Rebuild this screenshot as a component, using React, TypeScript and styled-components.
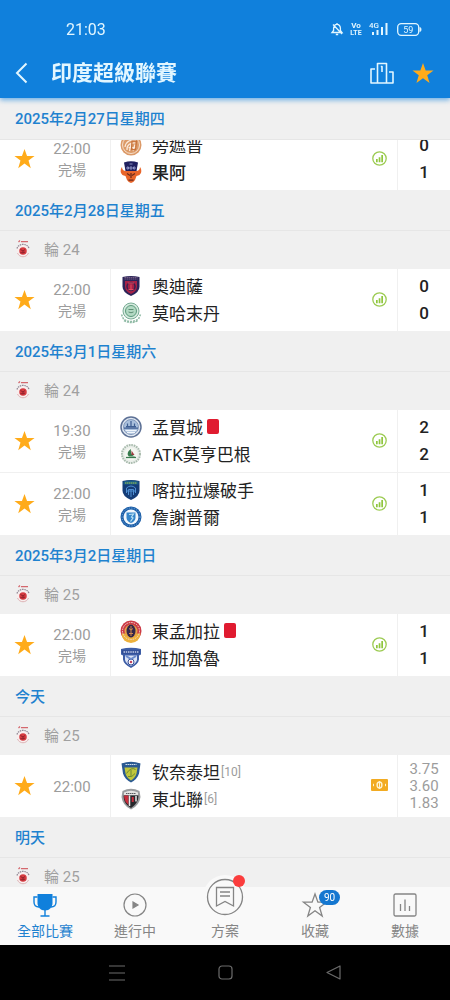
import React, { useLayoutEffect, useRef } from "react";
import styled, { createGlobalStyle } from "styled-components";

const color = {
  brand: "#1080dc",
  onBrand: "#e2f6ff",
  link: "#1f82cf",
  star: "#ffab1a",
  band: "#f0f0f0",
  line: "#e6e6e6",
  cellLine: "#f0f0f0",
  text: "#222222",
  muted: "#9c9c9c",
  tab: "#858585",
};

const GlobalStyle = createGlobalStyle`
  * { box-sizing: border-box; }
  body {
    margin: 0;
    background: #000;
    font-family: Roboto, "Noto Sans CJK TC", sans-serif;
    color: ${color.text};
  }
  button {
    border: 0;
    padding: 0;
    background: none;
    font: inherit;
    color: inherit;
    cursor: pointer;
  }
  h1, h2, h3, p, ul { margin: 0; padding: 0; font-size: inherit; font-weight: inherit; }
  ul { list-style: none; }
  svg { display: block; flex: none; overflow: visible; }
`;

const Screen = styled.div`
  display: flex;
  flex-direction: column;
  height: 100vh;
  background: ${color.band};
`;

const Header = styled.header`
  position: relative;
  z-index: 3;
  flex: none;
  background: ${color.brand};
  color: ${color.onBrand};
  box-shadow: 0 2px 5px rgba(16, 128, 220, 0.6);
`;

const StatusBar = styled.div`
  display: flex;
  align-items: center;
  justify-content: space-between;
  height: 50px;
  padding: 8px 28px 0 66px;
  font-size: 16px;
`;

const StatusIcons = styled.div`
  display: flex;
  align-items: center;
  gap: 8px;
`;

const AppBar = styled.div`
  display: flex;
  align-items: center;
  height: 48px;
  padding: 0 16px 2px 12px;
`;

const Title = styled.h1`
  flex: 1;
  padding-left: 19px;
  font-size: 21px;
  line-height: 30px;
  font-weight: 700;
`;

const IconButton = styled.button`
  display: grid;
  place-items: center;
  min-width: 20px;
  height: 32px;
`;

const Actions = styled.div`
  display: flex;
  align-items: center;
  gap: 18px;
`;

const Schedule = styled.main`
  flex: 1;
  min-height: 0;
  overflow-y: auto;
  scrollbar-width: none;
`;

const Day = styled.section`
  position: relative;
`;

const DayTitle = styled.h2<{ $pinned?: boolean }>`
  position: ${(p) => (p.$pinned ? "sticky" : "static")};
  top: 0;
  z-index: 1;
  height: ${(p) => (p.$pinned ? 42 : 41)}px;
  padding-left: 15px;
  border-bottom: 1px solid ${color.line};
  background: ${color.band};
  color: ${color.link};
  font-size: 15px;
  line-height: 42px;
  font-weight: 500;
`;

const Round = styled.h3`
  display: flex;
  align-items: center;
  gap: 14px;
  height: 38px;
  padding: 0 0 3px 16px;
  background: ${color.band};
  color: #a0a0a0;
  font-size: 15px;
`;

const MatchRow = styled.li`
  display: grid;
  grid-template-columns: 48px 62px minmax(0, 1fr) 36px 53px;
  height: 62px;
  background: #fff;

  & + & {
    height: 63px;
    border-top: 1px solid ${color.cellLine};
  }
`;

const StarButton = styled.button`
  display: grid;
  place-items: center;
  padding-bottom: 2px;
`;

const Kickoff = styled.div`
  display: flex;
  flex-direction: column;
  justify-content: center;
  padding: 2px 14px 0 0;
  color: ${color.muted};
  font-size: 15px;
  line-height: 21px;
  text-align: center;
`;

const Phase = styled.span`
  font-size: 14px;
`;

const Teams = styled.div`
  display: flex;
  flex-direction: column;
  justify-content: center;
  padding: 0 0 2px 9px;
  border-left: 1px solid ${color.cellLine};
`;

const Team = styled.div<{ $winner?: boolean }>`
  display: flex;
  align-items: center;
  height: 27px;
  font-size: 17px;
  font-weight: ${(p) => (p.$winner ? 500 : 400)};
`;

const TeamName = styled.span`
  padding-left: 10px;
  white-space: nowrap;
`;

const Rank = styled.span`
  padding-left: 1px;
  color: ${color.muted};
  font-size: 12px;
`;

const RedCard = styled.span`
  width: 12px;
  height: 15px;
  margin-left: 4px;
  border-radius: 2px;
  background: #e01b30;
`;

const Extra = styled.div`
  display: grid;
  place-items: center;
  padding-bottom: 2px;
`;

const Result = styled.div<{ $odds?: boolean }>`
  display: flex;
  flex-direction: column;
  justify-content: center;
  border-left: 1px solid ${color.cellLine};
  text-align: center;
  color: ${(p) => (p.$odds ? color.muted : color.text)};
  font-size: ${(p) => (p.$odds ? 15 : 17)}px;
  line-height: ${(p) => (p.$odds ? 17 : 27)}px;
  font-weight: ${(p) => (p.$odds ? 400 : 500)};
`;

const TabBar = styled.nav`
  position: relative;
  z-index: 2;
  flex: none;
  display: grid;
  grid-template-columns: repeat(5, 1fr);
  height: 58px;
  background: #f9f9f9;
`;

const Tab = styled.button<{ $active?: boolean }>`
  display: flex;
  flex-direction: column;
  align-items: center;
  gap: 4px;
  padding-top: 6px;
  color: ${(p) => (p.$active ? color.link : color.tab)};
  font-size: 14px;
  line-height: 20px;
`;

const TabIcon = styled.span`
  position: relative;
  width: 24px;
  height: 24px;
`;

const CountBadge = styled.span`
  position: absolute;
  top: -3px;
  left: 16px;
  width: 21px;
  border-radius: 8px;
  background: #1577d0;
  color: #fff;
  font-size: 10px;
  line-height: 15px;
  text-align: center;
`;

const RaisedIcon = styled.span`
  position: absolute;
  top: -18px;
  left: -10px;
  display: grid;
  place-items: center;
  width: 44px;
  height: 44px;
  border-radius: 50%;
  background: #f9f9f9;
`;

const Dot = styled.span`
  position: absolute;
  top: 0;
  right: 2px;
  width: 12px;
  height: 12px;
  border-radius: 50%;
  background: #fb3d3d;
`;

const SystemNav = styled.nav`
  flex: none;
  display: grid;
  grid-template-columns: repeat(3, 1fr);
  height: 55px;
  padding: 0 14%;
  background: #000;
`;

const SystemButton = styled.button`
  display: grid;
  place-items: center;
`;

const STAR = "M12 1l2.9 8.2h8.6l-6.9 5.2 2.6 8.6-7.2-5.2L4.800 23l2.600-8.600L.5 9.200h8.600z";

const StarIcon = ({ size = 21, outline = false }: { size?: number; outline?: boolean }) => (
  <svg width={size} height={size} viewBox="0 0 24 24" aria-hidden="true">
    <path d={STAR} fill={outline ? "none" : color.star} stroke={outline ? color.tab : "none"} strokeWidth="1.3" />
  </svg>
);

const BellOff = () => (
  <svg width="12" height="14" viewBox="0 0 12 14" fill="none" stroke="currentColor" strokeWidth="1.3">
    <path d="M1 10.500h10L9.400 8.500V6.200C9.400 4 8 2.400 6 2.400S2.600 4 2.600 6.200v2.300zM6 1v1.400M4.800 12.500h2.400M2 2.500l9 9.500" />
  </svg>
);

const VoLte = () => (
  <svg width="10" height="14" viewBox="0 0 10 14" fill="currentColor" fontFamily="Roboto" fontWeight="700">
    <text x="5" y="6" fontSize="8" textAnchor="middle">Vo</text>
    <text x="5" y="13" fontSize="7" textAnchor="middle">LTE</text>
  </svg>
);

const Signal = () => (
  <svg width="20" height="14" viewBox="0 0 20 14" fill="currentColor">
    <text x="0" y="6" fontSize="8" fontFamily="Roboto" fontWeight="500">4G</text>
    <path d="M3 10h2v3H3zM7.500 8h2v5h-2zM12 5h2v8h-2zM16.500 1h2v12h-2z" />
  </svg>
);

const Battery = () => (
  <svg width="25" height="13" viewBox="0 0 25 13">
    <rect x=".7" y=".7" width="21" height="11.600" rx="3.500" fill="none" stroke="currentColor" strokeWidth="1.300" />
    <path d="M23 4.500c1.300.4 1.300 3.600 0 4z" fill="currentColor" stroke="currentColor" />
    <text x="11.200" y="9.700" fontSize="9" fontFamily="Roboto" textAnchor="middle" fill="currentColor">59</text>
  </svg>
);

const BackIcon = () => (
  <svg width="20" height="22" viewBox="0 0 20 22" fill="none" stroke="currentColor" strokeWidth="2">
    <path d="M14.500 1.500L5 11l9.500 9.500" />
  </svg>
);

const PodiumIcon = () => (
  <svg width="24" height="22" viewBox="0 0 24 22" fill="none" stroke="currentColor" strokeWidth="1.600" strokeLinejoin="round">
    <path d="M7.500 21V1.500h9V21M5 7H1v14h22V10h-4M10.800 4.500H12V10" />
  </svg>
);

const ChartBadge = () => (
  <svg width="15" height="15" viewBox="0 0 15 15" aria-hidden="true">
    <circle cx="7.500" cy="7.500" r="6.700" fill="none" stroke="#9ccb52" strokeWidth="1.300" />
    <path d="M4 8h1.700v3.200H4zM6.700 6.300h1.700v4.900H6.700zM9.300 4h1.700v7.200H9.300z" fill="#8fc63d" />
  </svg>
);

const TicketIcon = () => (
  <svg width="17" height="12" viewBox="0 0 17 12" aria-hidden="true">
    <rect width="17" height="12" rx="1" fill="#f2ab22" />
    <ellipse cx="8.500" cy="6" rx="2.400" ry="3" fill="none" stroke="#fff3d0" strokeWidth="1.400" />
    <path d="M8.500 2v8M2.500 4.800v2.400M14.500 4.800v2.400" stroke="#fff3d0" strokeWidth="1" />
  </svg>
);

const LeagueLogo = () => (
  <svg width="14" height="18" viewBox="0 0 28 36" aria-hidden="true">
    <path d="M5 4l3-3M10 3h14" stroke="#d4686e" strokeWidth="2.500" />
    <circle cx="14" cy="21" r="13" fill="#f8eeee" />
    <path d="M2 17c3-11 21-11 24 0" fill="none" stroke="#8e8794" strokeWidth="2.500" strokeDasharray="3 1.500" />
    <path d="M3 26c4 10 18 10 22 0" fill="none" stroke="#ddb4b6" strokeWidth="2" />
    <circle cx="14" cy="22" r="7.500" fill="#d63a40" />
    <path d="M9 19l5 3 4-3M14 21v5M9 25l5 1 4-2" stroke="#7d1c26" strokeWidth="1.500" fill="none" />
  </svg>
);

const SHIELD = "M5 4q17-4 34 0v19q0 12-17 19Q5 35 5 23z";

const crests: Record<string, React.ReactNode> = {
  punjab: (
    <>
      <circle cx="22" cy="22" r="21" fill="#dc9a68" />
      <circle cx="22" cy="22" r="17" fill="none" stroke="#f6dfcb" strokeWidth="2" />
      <path d="M10 26c2-12 12-16 22-13M14 32c-1-10 6-15 17-14M19 34l3-14M26 34l4-13M17 27h15" stroke="#fbeadb" strokeWidth="2.500" fill="none" />
      <path d="M24 14h9l-2 17h-8z" fill="none" stroke="#c7733b" strokeWidth="2.500" />
    </>
  ),
  goa: (
    <>
      <path d="M4 12C-1 19 1 29 11 30l3 8q3 5 8 6 5-1 8-6l3-8c10-1 12-11 7-18 0 5-3 8-8 8H12c-5 0-8-3-8-8z" fill="#e8652a" />
      <path d="M8 3q14-5 28 0l-3 17H11z" fill="#20205f" />
      <path d="M19 6h6M14 12h3v4h-3zM20 12h4v4h-4zM27 12h3v4h-3z" stroke="#aeb4e0" strokeWidth="1.500" fill="none" />
      <path d="M14 25l6 4M30 25l-6 4M22 24v10M17 38h10" stroke="#6d2b1c" strokeWidth="2.500" />
    </>
  ),
  odisha: (
    <>
      <path d={SHIELD} fill="#2b2458" />
      <path d="M9 5h26M9 8h26" stroke="#8b6f91" strokeWidth="1.500" strokeDasharray="3 1" />
      <path d="M10 12h24v11q0 9-12 15-12-6-12-15z" fill="#a82146" />
      <circle cx="22" cy="23" r="8" fill="none" stroke="#35224f" strokeWidth="3" />
      <path d="M16 16h12M22 19v12M17 29h10" stroke="#e44c61" strokeWidth="2" />
    </>
  ),
  mohammedan: (
    <>
      <circle cx="22" cy="18" r="16" fill="#d6eadf" stroke="#79ad95" strokeWidth="2" />
      <circle cx="22" cy="18" r="11" fill="#b2d9c3" stroke="#5c9a7c" strokeWidth="2" />
      <path d="M17 15h10M17 20q5 3 10 0" stroke="#43745b" strokeWidth="1.500" fill="none" />
      <path d="M3 25l4 9q15 10 30 0l4-9M8 37q14 8 28 0" stroke="#8fbaa5" strokeWidth="3" strokeDasharray="4 2" fill="none" />
    </>
  ),
  mumbai: (
    <>
      <circle cx="22" cy="22" r="20" fill="#dfe7f1" stroke="#5d7196" strokeWidth="3" />
      <circle cx="22" cy="22" r="15" fill="#a8bfdc" stroke="#6f86ab" strokeWidth="1.500" />
      <path d="M8 24h28M12 21h20M15 21v-6M22 21V10M29 21v-6" stroke="#3f5f93" strokeWidth="2.500" />
      <path d="M11 29h22M14 33h16" stroke="#f0f5fb" strokeWidth="2.500" />
    </>
  ),
  mohunBagan: (
    <>
      <circle cx="22" cy="22" r="20" fill="#e9eee9" />
      <circle cx="22" cy="22" r="18" fill="none" stroke="#a9bbae" strokeWidth="4" strokeDasharray="3 2" />
      <circle cx="22" cy="22" r="13" fill="#f4f6f1" />
      <path d="M22 12c-8 5-8 12-4 15h13c-8-2-10-8-9-15z" fill="#377a4d" />
      <path d="M23 15l6 9h-6z" fill="#9b3a3c" />
      <path d="M12 29h20" stroke="#377a4d" strokeWidth="2.500" />
    </>
  ),
  kerala: (
    <>
      <path d={SHIELD} fill="#143c76" />
      <path d="M7 5q15-4 30 0v6H7z" fill="#1a5d87" />
      <path d="M10 8h24" stroke="#a3c94d" strokeWidth="2" strokeDasharray="3 1" />
      <path d="M13 28V18q9-8 18 0v10M17 32V21h10v11M22 21v15M13 24h18" stroke="#4f8fd2" strokeWidth="2" fill="none" />
    </>
  ),
  jamshedpur: (
    <>
      <circle cx="22" cy="22" r="21" fill="#1d5fa8" />
      <circle cx="22" cy="22" r="15" fill="#f1f7fc" />
      <circle cx="22" cy="22" r="18" fill="none" stroke="#7fb0df" strokeWidth="2" strokeDasharray="2 3" />
      <path d="M13 13h18v11q-1 7-9 10-8-3-9-10z" fill="#3585c9" />
      <path d="M18 17l9-1-4 6 3 2-5 7" stroke="#b7e0f4" strokeWidth="2.500" fill="none" />
    </>
  ),
  eastBengal: (
    <>
      <circle cx="22" cy="22" r="21" fill="#cc3a46" />
      <path d="M3 27a19 19 0 0038 0z" fill="#edb13c" />
      <circle cx="22" cy="22" r="17" fill="none" stroke="#f3d9cf" strokeWidth="2" strokeDasharray="3 2" />
      <circle cx="22" cy="22" r="13" fill="#e5a147" />
      <ellipse cx="22" cy="22" rx="9" ry="13" fill="#33264a" />
      <path d="M22 12v20M18 17l4 3 4-3M18 27h8" stroke="#d58a4e" strokeWidth="2" fill="none" />
    </>
  ),
  bengaluru: (
    <>
      <path d="M2 4q20-5 40 0v11l-4 2v8q-1 9-16 17Q7 34 6 25v-8l-4-2z" fill="#3d5da6" />
      <path d="M4 7h36v6H4z" fill="#2c4890" />
      <path d="M7 10h30" stroke="#c4d0ec" strokeWidth="3" strokeDasharray="3 1.500" />
      <path d="M10 17h24v9q-2 7-12 12-10-5-12-12z" fill="#dbe4f6" />
      <circle cx="22" cy="30" r="6" fill="#fff" stroke="#3a4f93" strokeWidth="2" />
      <path d="M12 18l10 6 10-6" stroke="#6b8bcc" strokeWidth="4" fill="none" />
      <circle cx="22" cy="30" r="2.500" fill="#c14460" />
    </>
  ),
  chennaiyin: (
    <>
      <path d="M3 5q19-7 38 0l-3 20q-3 11-16 18Q9 36 6 25z" fill="#2b5a92" />
      <path d="M9 13h26l-2 12q-2 8-11 14-9-6-11-14z" fill="#c1c73b" />
      <path d="M11 7h22" stroke="#cfdfec" strokeWidth="2" strokeDasharray="3 1" />
      <path d="M13 25q9-14 18-8M16 31q8 3 14-6M22 18v12" stroke="#6e8a34" strokeWidth="2" fill="none" />
    </>
  ),
  northEast: (
    <>
      <path d="M5 6q17-9 34 0l2 12q-2 17-19 25Q5 35 3 18z" fill="#9a9c9e" />
      <path d="M8 9q14-7 28 0v5H8z" fill="#e4e4e2" />
      <path d="M7 15h30l-1 8q-3 10-14 17Q10 33 8 23z" fill="#27282c" />
      <path d="M8 15h9v19q-7-5-8-12z" fill="#c92d3c" />
      <path d="M19 15v21M32 16v11" stroke="#e9e9e9" strokeWidth="3" />
      <path d="M25.500 18v10" stroke="#c92d3c" strokeWidth="4" />
      <path d="M12 11h20" stroke="#5b5c60" strokeWidth="2" strokeDasharray="3 1" />
    </>
  ),
};

const Crest = ({ club }: { club: string }) => (
  <svg width="22" height="22" viewBox="0 0 44 44" aria-hidden="true">
    {crests[club]}
  </svg>
);

type Club = { crest: string; name: string; rank?: number; redCard?: boolean; winner?: boolean };
type Match = { time: string; phase?: string; clubs: [Club, Club]; score?: [number, number]; odds?: string[] };
type MatchDay = { title: string; round?: string; matches: Match[] };

const days: MatchDay[] = [
  {
    title: "2025年2月27日星期四",
    matches: [
      {
        time: "22:00",
        phase: "完場",
        clubs: [{ crest: "punjab", name: "旁遮普" }, { crest: "goa", name: "果阿", winner: true }],
        score: [0, 1],
      },
    ],
  },
  {
    title: "2025年2月28日星期五",
    round: "輪 24",
    matches: [
      {
        time: "22:00",
        phase: "完場",
        clubs: [{ crest: "odisha", name: "奧迪薩" }, { crest: "mohammedan", name: "莫哈末丹" }],
        score: [0, 0],
      },
    ],
  },
  {
    title: "2025年3月1日星期六",
    round: "輪 24",
    matches: [
      {
        time: "19:30",
        phase: "完場",
        clubs: [{ crest: "mumbai", name: "孟買城", redCard: true }, { crest: "mohunBagan", name: "ATK莫亨巴根" }],
        score: [2, 2],
      },
      {
        time: "22:00",
        phase: "完場",
        clubs: [{ crest: "kerala", name: "喀拉拉爆破手" }, { crest: "jamshedpur", name: "詹謝普爾" }],
        score: [1, 1],
      },
    ],
  },
  {
    title: "2025年3月2日星期日",
    round: "輪 25",
    matches: [
      {
        time: "22:00",
        phase: "完場",
        clubs: [{ crest: "eastBengal", name: "東孟加拉", redCard: true }, { crest: "bengaluru", name: "班加魯魯" }],
        score: [1, 1],
      },
    ],
  },
  {
    title: "今天",
    round: "輪 25",
    matches: [
      {
        time: "22:00",
        clubs: [{ crest: "chennaiyin", name: "钦奈泰坦", rank: 10 }, { crest: "northEast", name: "東北聯", rank: 6 }],
        odds: ["3.75", "3.60", "1.83"],
      },
    ],
  },
  { title: "明天", round: "輪 25", matches: [] },
];

const MatchItem = ({ match }: { match: Match }) => (
  <MatchRow>
    <StarButton aria-label="收藏">
      <StarIcon />
    </StarButton>
    <Kickoff>
      <time>{match.time}</time>
      {match.phase && <Phase>{match.phase}</Phase>}
    </Kickoff>
    <Teams>
      {match.clubs.map((club) => (
        <Team key={club.name} $winner={club.winner}>
          <Crest club={club.crest} />
          <TeamName>{club.name}</TeamName>
          {club.redCard && <RedCard />}
          {club.rank && <Rank>[{club.rank}]</Rank>}
        </Team>
      ))}
    </Teams>
    <Extra>{match.odds ? <TicketIcon /> : <ChartBadge />}</Extra>
    <Result $odds={Boolean(match.odds)}>
      {(match.odds ?? match.score ?? []).map((value, i) => (
        <span key={i}>{value}</span>
      ))}
    </Result>
  </MatchRow>
);

const TrophyIcon = () => (
  <svg width="24" height="24" viewBox="0 0 24 24" fill="none" stroke="#1080dc" strokeWidth="1.400">
    <path d="M4.500 1h15v9c0 4-3 7.500-7.500 7.500S4.500 14 4.500 10z" fill="#1080dc" stroke="none" />
    <path d="M4.500 4H1v5c0 3 2 5 5 5M19.500 4H23v5c0 3-2 5-5 5M12 17v6M7.500 23h9" />
  </svg>
);

const PlayIcon = () => (
  <svg width="24" height="24" viewBox="0 0 24 24" fill="none" stroke="currentColor" strokeWidth="1.200">
    <circle cx="12" cy="12" r="11" />
    <path d="M10 9l5 3-5 3z" fill="currentColor" />
  </svg>
);

const PlanIcon = () => (
  <svg width="38" height="38" viewBox="0 0 38 38" fill="none" stroke="currentColor" strokeWidth="1.300">
    <circle cx="19" cy="19" r="17.500" />
    <path d="M10.500 9.500h17V28L19 23.500 10.500 28zM14 14h10M14 18h10" />
  </svg>
);

const DataIcon = () => (
  <svg width="24" height="24" viewBox="0 0 24 24" fill="none" stroke="currentColor" strokeWidth="1.300">
    <rect x="1" y="1" width="22" height="22" rx="1.500" />
    <path d="M7.500 11v7M12 6.500V18M16.500 13v5" />
  </svg>
);

export default function App() {
  const list = useRef<HTMLElement>(null);

  // Opens the list slightly scrolled, with the first match under its pinned date.
  useLayoutEffect(() => {
    if (list.current) list.current.scrollTop = 12;
  }, []);

  return (
    <Screen>
      <GlobalStyle />
      <Header>
        <StatusBar>
          <time>21:03</time>
          <StatusIcons>
            <BellOff />
            <VoLte />
            <Signal />
            <Battery />
          </StatusIcons>
        </StatusBar>
        <AppBar>
          <IconButton aria-label="返回">
            <BackIcon />
          </IconButton>
          <Title>印度超級聯賽</Title>
          <Actions>
            <IconButton aria-label="積分榜">
              <PodiumIcon />
            </IconButton>
            <IconButton aria-label="收藏聯賽">
              <StarIcon size={22} />
            </IconButton>
          </Actions>
        </AppBar>
      </Header>

      <Schedule ref={list}>
        {days.map((day, i) => (
          <Day key={day.title}>
            <DayTitle $pinned={i === 0}>{day.title}</DayTitle>
            {day.round && (
              <Round>
                <LeagueLogo />
                {day.round}
              </Round>
            )}
            <ul>
              {day.matches.map((match) => (
                <MatchItem key={match.clubs[0].name} match={match} />
              ))}
            </ul>
          </Day>
        ))}
      </Schedule>

      <TabBar>
        <Tab $active>
          <TabIcon><TrophyIcon /></TabIcon>
          全部比賽
        </Tab>
        <Tab>
          <TabIcon><PlayIcon /></TabIcon>
          進行中
        </Tab>
        <Tab>
          <TabIcon>
            <RaisedIcon>
              <PlanIcon />
              <Dot />
            </RaisedIcon>
          </TabIcon>
          方案
        </Tab>
        <Tab>
          <TabIcon>
            <StarIcon size={24} outline />
            <CountBadge>90</CountBadge>
          </TabIcon>
          收藏
        </Tab>
        <Tab>
          <TabIcon><DataIcon /></TabIcon>
          數據
        </Tab>
      </TabBar>

      <SystemNav>
        <SystemButton aria-label="選單">
          <svg width="16" height="16" viewBox="0 0 16 16" stroke="#6c6c6c" strokeWidth="1.200">
            <path d="M0 1h16M0 8h16M0 15h16" />
          </svg>
        </SystemButton>
        <SystemButton aria-label="主畫面">
          <svg width="15" height="15" viewBox="0 0 15 15" fill="none" stroke="#6c6c6c" strokeWidth="1.200">
            <rect x="1" y="1" width="13" height="13" rx="3" />
          </svg>
        </SystemButton>
        <SystemButton aria-label="上一頁">
          <svg width="15" height="15" viewBox="0 0 15 15" fill="none" stroke="#6c6c6c" strokeWidth="1.200" strokeLinejoin="round">
            <path d="M14 1v13L1 7.500z" />
          </svg>
        </SystemButton>
      </SystemNav>
    </Screen>
  );
}
